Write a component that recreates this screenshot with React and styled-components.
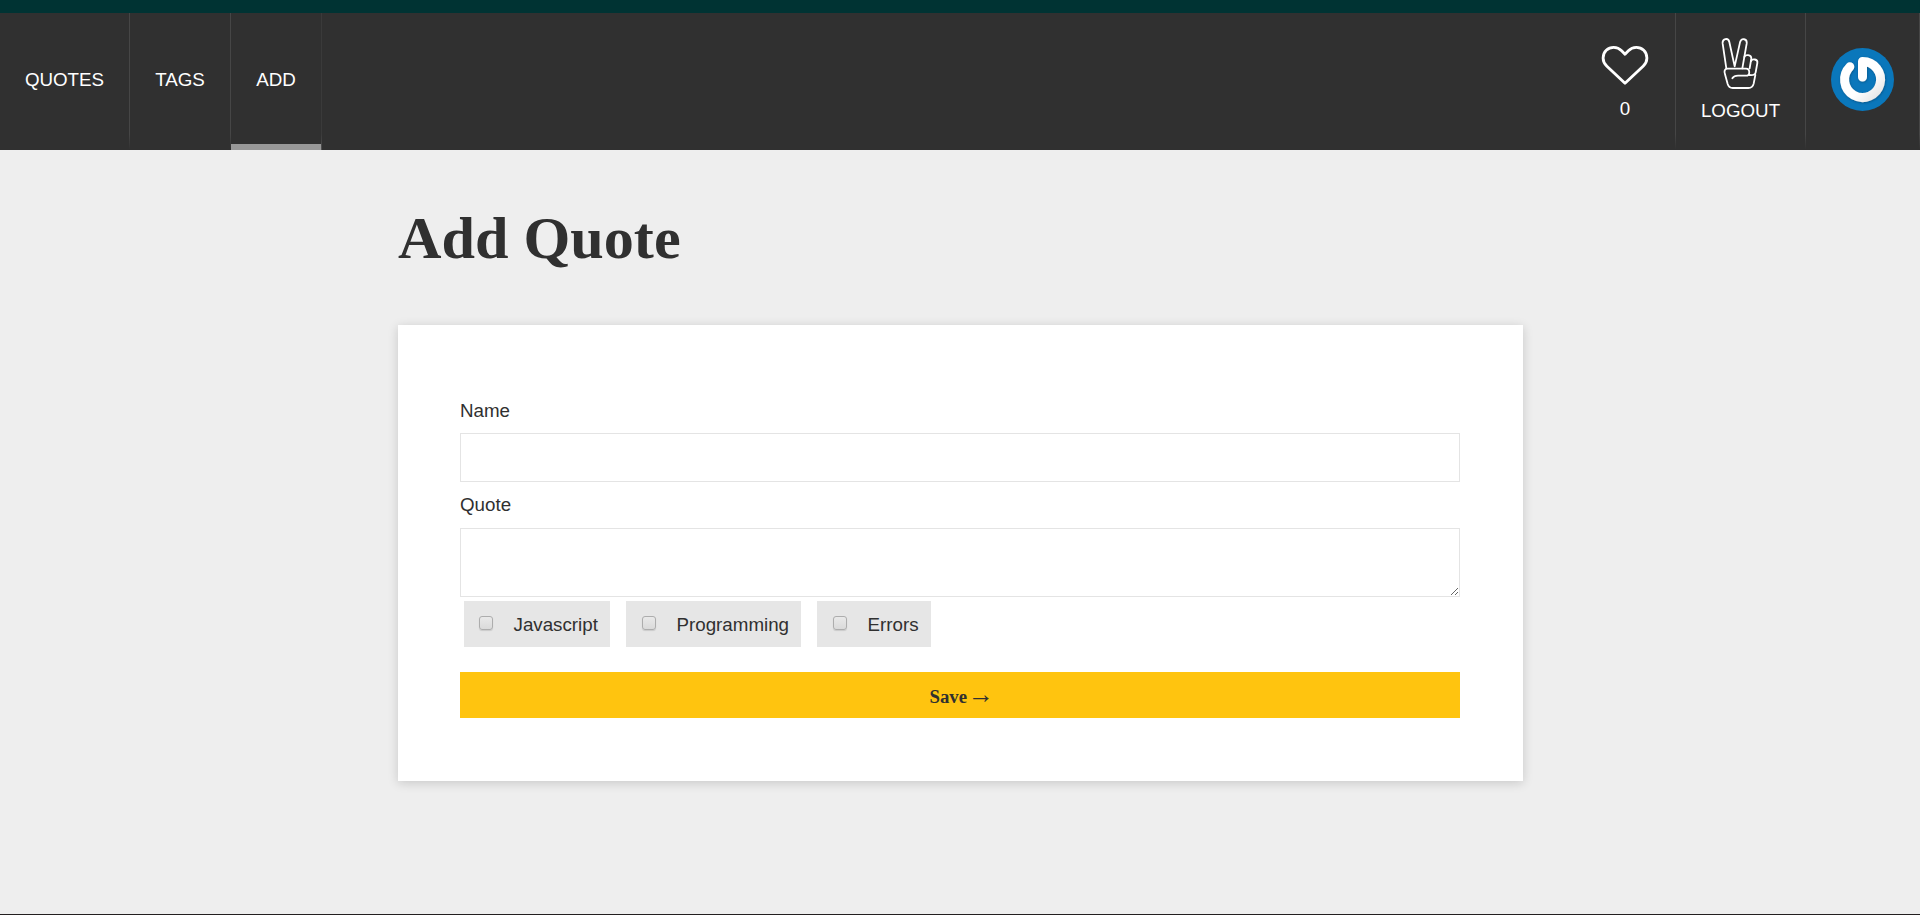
import React from "react";
import styled, { createGlobalStyle } from "styled-components";

const GlobalStyle = createGlobalStyle`
  *, *::before, *::after { box-sizing: border-box; }
  body {
    margin: 0;
    background: #eeeeee;
    color: #303030;
    font-family: "Liberation Sans", Arial, sans-serif;
    font-size: 18.75px;
  }
`;

const Page = styled.div`
  display: flex;
  flex-direction: column;
  height: 915px;
  border-top: 13px solid #003333;
  border-bottom: 1px solid #231f20;
`;

const Header = styled.header`
  display: flex;
  justify-content: space-between;
  flex: none;
  height: 137px;
  background: #303030;
`;

const NavGroup = styled.nav`
  display: flex;
`;

const NavItem = styled.a`
  display: flex;
  flex-direction: column;
  align-items: center;
  justify-content: center;
  width: ${(p) => p.$width}px;
  padding: ${(p) => p.$shift || 0}px 0 5px;
  border-right: 1px solid;
  border-image: ${(p) =>
    p.$active
      ? "linear-gradient(#3a3a3a 0%, #3a3a3a 88%, #505050 99%) 1"
      : "linear-gradient(#464646 0%, #464646 88%, #303030 99%) 1"};
  box-shadow: ${(p) => (p.$active ? "inset 0 -6px 0 #989898" : "none")};
  color: #ffffff;
  line-height: 22px;
  text-transform: uppercase;
`;

const NavIcon = styled.svg`
  display: block;
  width: 50px;
  height: ${(p) => p.$height}px;
  margin-bottom: ${(p) => p.$gap}px;
  fill: none;
  stroke: #ffffff;
  stroke-linecap: round;
  stroke-linejoin: round;
`;

const Avatar = styled.svg`
  display: block;
  width: 63px;
  height: 63px;
`;

const Main = styled.main`
  width: 1125px;
  margin: 0 auto;
`;

const Title = styled.h1`
  margin: 53px 0 52px 0.5px;
  font: bold 60.2px/70px "Liberation Serif", "Times New Roman", serif;
`;

const Card = styled.form`
  display: flex;
  flex-direction: column;
  height: 456px;
  padding: 72px 62.5px 0;
  background: #ffffff;
  box-shadow: 0 2px 10px rgba(0, 0, 0, 0.16);
`;

const Label = styled.label`
  line-height: 28px;
`;

const TextInput = styled.input`
  height: 49px;
  margin: 8px 0 9px;
  padding: 12px;
  border: 1px solid #e4e4e4;
  outline: 0;
  font: inherit;
`;

const TextArea = styled.textarea`
  height: 69px;
  margin: 9px 0 4px;
  padding: 12px;
  border: 1px solid #e4e4e4;
  outline: 0;
  font: inherit;
  resize: vertical;
`;

const TagList = styled.div`
  display: flex;
  gap: 16px;
  margin: 0 0 25px 4px;
`;

const Tag = styled.label`
  display: flex;
  align-items: center;
  width: ${(p) => p.$width}px;
  height: 46px;
  padding: 1px 0 0 ${(p) => p.$inset}px;
  background: #e6e6e6;
`;

const Checkbox = styled.input`
  appearance: none;
  width: 14px;
  height: 14px;
  margin: -4px 20.5px 0 0;
  border: 1px solid #adadad;
  border-radius: 3px;
  background: linear-gradient(#e9e9e9, #dadada);
  box-shadow: 0 1px 1px rgba(0, 0, 0, 0.12);
`;

const SaveButton = styled.button`
  height: 46px;
  padding: 3px 0 0;
  border: 0;
  background: #ffc40f;
  color: #303030;
  font: bold 18.75px/22px "Liberation Serif", "Times New Roman", serif;
`;

const Arrow = styled.span`
  margin: 0 -3.6px;
  font-size: 26px;
  font-weight: normal;
  line-height: 0;
`;

const tags = [
  { name: "Javascript", width: 146, inset: 15 },
  { name: "Programming", width: 175, inset: 16 },
  { name: "Errors", width: 114, inset: 16 },
];

function HeartIcon() {
  return (
    <NavIcon viewBox="0 0 50 42" $height={42} $gap={11} strokeWidth="2.8">
      <path d="M25 38.3 L6.9 21.3 C3.6 18.1 3.1 15.8 3.1 13 C3.1 6.5 8 2.3 13.7 2.3 C17.2 2.3 19.8 3.8 21.6 5.7 L25 9.3 L28.4 5.7 C30.2 3.8 32.8 2.3 36.3 2.3 C42 2.3 46.9 6.5 46.9 13 C46.9 15.8 46.4 18.1 43.1 21.3 Z" />
    </NavIcon>
  );
}

function PeaceIcon() {
  return (
    <NavIcon viewBox="18 37 150 156" $height={52} $gap={10} strokeWidth="5.4">
      <path d="M49 128 L38 54 C36 38 55 35 58 49 L74 122 L90 50 C94 36 112 38 110 54 L97 128" />
      <path d="M103 94 C106 86 124 86 124 98 L119 128" />
      <path d="M123 106 C127 98 144 100 142 112 L137 140 C135 150 124 149 117 148" />
      <path d="M67 158 C72 150 77 150 84 150 L108 150 C121 150 121 129 108 129 L53 129 C43 129 42 137 45 146 L53 175 C56 185 60 187 68 187 L115 187 C126 187 129 183 131 174 L136 148" />
    </NavIcon>
  );
}

function GravatarLogo() {
  return (
    <Avatar viewBox="0 0 63 63">
      <defs>
        <filter id="soft" x="-20%" y="-20%" width="140%" height="140%">
          <feDropShadow dx="0.5" dy="0.8" stdDeviation="1" floodColor="#003b66" floodOpacity="0.6" />
        </filter>
        <linearGradient id="sheen" x1="0" y1="0" x2="1" y2="1">
          <stop offset="0.6" stopColor="#ffffff" />
          <stop offset="1" stopColor="#e4e4e4" />
        </linearGradient>
      </defs>
      <circle cx="31.5" cy="31.5" r="31.5" fill="#0a77bb" />
      <path
        d="M31.5 29 V13.5 A18 18 0 1 1 18.8 18.8"
        fill="none"
        stroke="url(#sheen)"
        strokeWidth="9"
        strokeLinecap="round"
        strokeLinejoin="round"
        filter="url(#soft)"
      />
    </Avatar>
  );
}

export default function App() {
  return (
    <Page>
      <GlobalStyle />
      <Header>
        <NavGroup>
          <NavItem $width={130} $shift={2}>Quotes</NavItem>
          <NavItem $width={101} $shift={2}>Tags</NavItem>
          <NavItem $width={91} $shift={2} $active>Add</NavItem>
        </NavGroup>
        <NavGroup>
          <NavItem $width={101} $shift={6}>
            <HeartIcon />
            <span>0</span>
          </NavItem>
          <NavItem $width={130} $shift={1}>
            <PeaceIcon />
            <span>Logout</span>
          </NavItem>
          <NavItem $width={114} $shift={1}>
            <GravatarLogo />
          </NavItem>
        </NavGroup>
      </Header>
      <Main>
        <Title>Add Quote</Title>
        <Card>
          <Label htmlFor="name">Name</Label>
          <TextInput id="name" type="text" />
          <Label htmlFor="quote">Quote</Label>
          <TextArea id="quote" />
          <TagList>
            {tags.map((tag) => (
              <Tag key={tag.name} $width={tag.width} $inset={tag.inset}>
                <Checkbox type="checkbox" />
                {tag.name}
              </Tag>
            ))}
          </TagList>
          <SaveButton type="button">
            Save <Arrow>→</Arrow>
          </SaveButton>
        </Card>
      </Main>
    </Page>
  );
}
